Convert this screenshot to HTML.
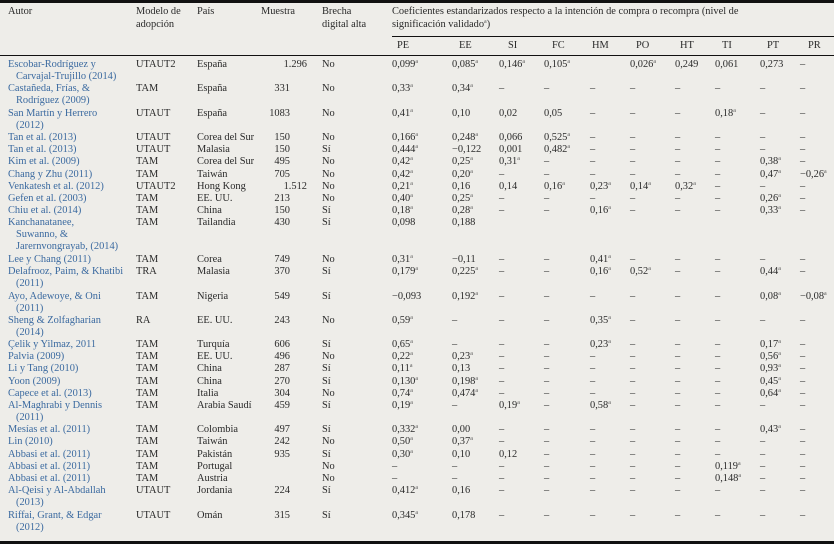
<!DOCTYPE html>
<html><head><meta charset="utf-8"><style>
body{margin:0;width:834px;height:544px;background:#eeede9;font-family:"Liberation Serif",serif;font-size:10.4px;color:#2a2a2a;position:relative;overflow:hidden}
.l{position:absolute;left:0;width:834px;background:#111}
.h{position:absolute;line-height:12.5px;white-space:nowrap}
.r{position:absolute;left:0;width:834px;height:12px;line-height:12.2px}
.r span{position:absolute;top:0;white-space:nowrap}
.a{position:absolute;left:0;top:0;width:130px;padding-left:16px;text-indent:-8px;color:#3b6aa0;line-height:12.2px;white-space:nowrap}
sup{font-size:6px;vertical-align:4px;line-height:0;color:#555}
.m{left:136px}.p{left:197px}.n{left:240px;width:50px;text-align:right}.b{left:322px}
.d1{left:392px}.d2{left:452px}.d3{left:499px}.d4{left:544px}.d5{left:590px}.d6{left:630px}.d7{left:675px}.d8{left:715px}.d9{left:760px}.d10{left:800px}
</style></head><body>
<div class="l" style="top:0;height:3px"></div>
<div class="l" style="top:55px;height:1px"></div>
<div class="l" style="top:36px;left:392px;width:442px;height:1px"></div>
<div class="l" style="top:541px;height:3px"></div>
<div class="h" style="left:8px;top:6px">Autor</div>
<div class="h" style="left:136px;top:6px">Modelo de<br>adopción</div>
<div class="h" style="left:197px;top:6px">País</div>
<div class="h" style="left:261px;top:6px">Muestra</div>
<div class="h" style="left:322px;top:6px">Brecha<br>digital alta</div>
<div class="h" style="left:392px;top:6px">Coeficientes estandarizados respecto a la intención de compra o recompra (nivel de<br>significación validado<sup>a</sup>)</div>
<div class="h" style="top:40px;left:0;width:834px;height:12px">
<span style="position:absolute;left:397px">PE</span><span style="position:absolute;left:459px">EE</span><span style="position:absolute;left:508px">SI</span><span style="position:absolute;left:552px">FC</span><span style="position:absolute;left:592px">HM</span><span style="position:absolute;left:636px">PO</span><span style="position:absolute;left:680px">HT</span><span style="position:absolute;left:722px">TI</span><span style="position:absolute;left:767px">PT</span><span style="position:absolute;left:808px">PR</span></div>

<div class="r" style="top:59px"><div class="a">Escobar-Rodríguez y<br>Carvajal-Trujillo (2014)</div><span class="m">UTAUT2</span><span class="p">España</span><span class="n" style="left:257px">1.296</span><span class="b">No</span><span class="d1">0,099<sup>a</sup></span><span class="d2">0,085<sup>a</sup></span><span class="d3">0,146<sup>a</sup></span><span class="d4">0,105<sup>a</sup></span><span class="d6">0,026<sup>a</sup></span><span class="d7">0,249</span><span class="d8">0,061</span><span class="d9">0,273</span><span class="d10">–</span></div>
<div class="r" style="top:83px"><div class="a">Castañeda, Frías, &amp;<br>Rodríguez (2009)</div><span class="m">TAM</span><span class="p">España</span><span class="n">331</span><span class="b">No</span><span class="d1">0,33<sup>a</sup></span><span class="d2">0,34<sup>a</sup></span><span class="d3">–</span><span class="d4">–</span><span class="d5">–</span><span class="d6">–</span><span class="d7">–</span><span class="d8">–</span><span class="d9">–</span><span class="d10">–</span></div>
<div class="r" style="top:108px"><div class="a">San Martín y Herrero<br>(2012)</div><span class="m">UTAUT</span><span class="p">España</span><span class="n">1083</span><span class="b">No</span><span class="d1">0,41<sup>a</sup></span><span class="d2">0,10</span><span class="d3">0,02</span><span class="d4">0,05</span><span class="d5">–</span><span class="d6">–</span><span class="d7">–</span><span class="d8">0,18<sup>a</sup></span><span class="d9">–</span><span class="d10">–</span></div>
<div class="r" style="top:132px"><div class="a">Tan et al. (2013)</div><span class="m">UTAUT</span><span class="p">Corea del Sur</span><span class="n">150</span><span class="b">No</span><span class="d1">0,166<sup>a</sup></span><span class="d2">0,248<sup>a</sup></span><span class="d3">0,066</span><span class="d4">0,525<sup>a</sup></span><span class="d5">–</span><span class="d6">–</span><span class="d7">–</span><span class="d8">–</span><span class="d9">–</span><span class="d10">–</span></div>
<div class="r" style="top:144px"><div class="a">Tan et al. (2013)</div><span class="m">UTAUT</span><span class="p">Malasia</span><span class="n">150</span><span class="b">Sí</span><span class="d1">0,444<sup>a</sup></span><span class="d2">−0,122</span><span class="d3">0,001</span><span class="d4">0,482<sup>a</sup></span><span class="d5">–</span><span class="d6">–</span><span class="d7">–</span><span class="d8">–</span><span class="d9">–</span><span class="d10">–</span></div>
<div class="r" style="top:156px"><div class="a">Kim et al. (2009)</div><span class="m">TAM</span><span class="p">Corea del Sur</span><span class="n">495</span><span class="b">No</span><span class="d1">0,42<sup>a</sup></span><span class="d2">0,25<sup>a</sup></span><span class="d3">0,31<sup>a</sup></span><span class="d4">–</span><span class="d5">–</span><span class="d6">–</span><span class="d7">–</span><span class="d8">–</span><span class="d9">0,38<sup>a</sup></span><span class="d10">–</span></div>
<div class="r" style="top:169px"><div class="a">Chang y Zhu (2011)</div><span class="m">TAM</span><span class="p">Taiwán</span><span class="n">705</span><span class="b">No</span><span class="d1">0,42<sup>a</sup></span><span class="d2">0,20<sup>a</sup></span><span class="d3">–</span><span class="d4">–</span><span class="d5">–</span><span class="d6">–</span><span class="d7">–</span><span class="d8">–</span><span class="d9">0,47<sup>a</sup></span><span class="d10">−0,26<sup>a</sup></span></div>
<div class="r" style="top:181px"><div class="a">Venkatesh et al. (2012)</div><span class="m">UTAUT2</span><span class="p">Hong Kong</span><span class="n" style="left:257px">1.512</span><span class="b">No</span><span class="d1">0,21<sup>a</sup></span><span class="d2">0,16</span><span class="d3">0,14</span><span class="d4">0,16<sup>a</sup></span><span class="d5">0,23<sup>a</sup></span><span class="d6">0,14<sup>a</sup></span><span class="d7">0,32<sup>a</sup></span><span class="d8">–</span><span class="d9">–</span><span class="d10">–</span></div>
<div class="r" style="top:193px"><div class="a">Gefen et al. (2003)</div><span class="m">TAM</span><span class="p">EE. UU.</span><span class="n">213</span><span class="b">No</span><span class="d1">0,40<sup>a</sup></span><span class="d2">0,25<sup>a</sup></span><span class="d3">–</span><span class="d4">–</span><span class="d5">–</span><span class="d6">–</span><span class="d7">–</span><span class="d8">–</span><span class="d9">0,26<sup>a</sup></span><span class="d10">–</span></div>
<div class="r" style="top:205px"><div class="a">Chiu et al. (2014)</div><span class="m">TAM</span><span class="p">China</span><span class="n">150</span><span class="b">Sí</span><span class="d1">0,18<sup>a</sup></span><span class="d2">0,28<sup>a</sup></span><span class="d3">–</span><span class="d4">–</span><span class="d5">0,16<sup>a</sup></span><span class="d6">–</span><span class="d7">–</span><span class="d8">–</span><span class="d9">0,33<sup>a</sup></span><span class="d10">–</span></div>
<div class="r" style="top:217px"><div class="a">Kanchanatanee,<br>Suwanno, &amp;<br>Jarernvongrayab, (2014)</div><span class="m">TAM</span><span class="p">Tailandia</span><span class="n">430</span><span class="b">Sí</span><span class="d1">0,098</span><span class="d2">0,188</span></div>
<div class="r" style="top:254px"><div class="a">Lee y Chang (2011)</div><span class="m">TAM</span><span class="p">Corea</span><span class="n">749</span><span class="b">No</span><span class="d1">0,31<sup>a</sup></span><span class="d2">−0,11</span><span class="d3">–</span><span class="d4">–</span><span class="d5">0,41<sup>a</sup></span><span class="d6">–</span><span class="d7">–</span><span class="d8">–</span><span class="d9">–</span><span class="d10">–</span></div>
<div class="r" style="top:266px"><div class="a">Delafrooz, Paim, &amp; Khatibi<br>(2011)</div><span class="m">TRA</span><span class="p">Malasia</span><span class="n">370</span><span class="b">Sí</span><span class="d1">0,179<sup>a</sup></span><span class="d2">0,225<sup>a</sup></span><span class="d3">–</span><span class="d4">–</span><span class="d5">0,16<sup>a</sup></span><span class="d6">0,52<sup>a</sup></span><span class="d7">–</span><span class="d8">–</span><span class="d9">0,44<sup>a</sup></span><span class="d10">–</span></div>
<div class="r" style="top:291px"><div class="a">Ayo, Adewoye, &amp; Oni<br>(2011)</div><span class="m">TAM</span><span class="p">Nigeria</span><span class="n">549</span><span class="b">Sí</span><span class="d1">−0,093</span><span class="d2">0,192<sup>a</sup></span><span class="d3">–</span><span class="d4">–</span><span class="d5">–</span><span class="d6">–</span><span class="d7">–</span><span class="d8">–</span><span class="d9">0,08<sup>a</sup></span><span class="d10">−0,08<sup>a</sup></span></div>
<div class="r" style="top:315px"><div class="a">Sheng &amp; Zolfagharian<br>(2014)</div><span class="m">RA</span><span class="p">EE. UU.</span><span class="n">243</span><span class="b">No</span><span class="d1">0,59<sup>a</sup></span><span class="d2">–</span><span class="d3">–</span><span class="d4">–</span><span class="d5">0,35<sup>a</sup></span><span class="d6">–</span><span class="d7">–</span><span class="d8">–</span><span class="d9">–</span><span class="d10">–</span></div>
<div class="r" style="top:339px"><div class="a">Çelik y Yilmaz, 2011</div><span class="m">TAM</span><span class="p">Turquía</span><span class="n">606</span><span class="b">Sí</span><span class="d1">0,65<sup>a</sup></span><span class="d2">–</span><span class="d3">–</span><span class="d4">–</span><span class="d5">0,23<sup>a</sup></span><span class="d6">–</span><span class="d7">–</span><span class="d8">–</span><span class="d9">0,17<sup>a</sup></span><span class="d10">–</span></div>
<div class="r" style="top:351px"><div class="a">Palvia (2009)</div><span class="m">TAM</span><span class="p">EE. UU.</span><span class="n">496</span><span class="b">No</span><span class="d1">0,22<sup>a</sup></span><span class="d2">0,23<sup>a</sup></span><span class="d3">–</span><span class="d4">–</span><span class="d5">–</span><span class="d6">–</span><span class="d7">–</span><span class="d8">–</span><span class="d9">0,56<sup>a</sup></span><span class="d10">–</span></div>
<div class="r" style="top:363px"><div class="a">Li y Tang (2010)</div><span class="m">TAM</span><span class="p">China</span><span class="n">287</span><span class="b">Sí</span><span class="d1">0,11<sup>a</sup></span><span class="d2">0,13</span><span class="d3">–</span><span class="d4">–</span><span class="d5">–</span><span class="d6">–</span><span class="d7">–</span><span class="d8">–</span><span class="d9">0,93<sup>a</sup></span><span class="d10">–</span></div>
<div class="r" style="top:376px"><div class="a">Yoon (2009)</div><span class="m">TAM</span><span class="p">China</span><span class="n">270</span><span class="b">Sí</span><span class="d1">0,130<sup>a</sup></span><span class="d2">0,198<sup>a</sup></span><span class="d3">–</span><span class="d4">–</span><span class="d5">–</span><span class="d6">–</span><span class="d7">–</span><span class="d8">–</span><span class="d9">0,45<sup>a</sup></span><span class="d10">–</span></div>
<div class="r" style="top:388px"><div class="a">Capece et al. (2013)</div><span class="m">TAM</span><span class="p">Italia</span><span class="n">304</span><span class="b">No</span><span class="d1">0,74<sup>a</sup></span><span class="d2">0,474<sup>a</sup></span><span class="d3">–</span><span class="d4">–</span><span class="d5">–</span><span class="d6">–</span><span class="d7">–</span><span class="d8">–</span><span class="d9">0,64<sup>a</sup></span><span class="d10">–</span></div>
<div class="r" style="top:400px"><div class="a">Al-Maghrabi y Dennis<br>(2011)</div><span class="m">TAM</span><span class="p">Arabia Saudí</span><span class="n">459</span><span class="b">Sí</span><span class="d1">0,19<sup>a</sup></span><span class="d2">–</span><span class="d3">0,19<sup>a</sup></span><span class="d4">–</span><span class="d5">0,58<sup>a</sup></span><span class="d6">–</span><span class="d7">–</span><span class="d8">–</span><span class="d9">–</span><span class="d10">–</span></div>
<div class="r" style="top:424px"><div class="a">Mesías et al. (2011)</div><span class="m">TAM</span><span class="p">Colombia</span><span class="n">497</span><span class="b">Sí</span><span class="d1">0,332<sup>a</sup></span><span class="d2">0,00</span><span class="d3">–</span><span class="d4">–</span><span class="d5">–</span><span class="d6">–</span><span class="d7">–</span><span class="d8">–</span><span class="d9">0,43<sup>a</sup></span><span class="d10">–</span></div>
<div class="r" style="top:436px"><div class="a">Lin (2010)</div><span class="m">TAM</span><span class="p">Taiwán</span><span class="n">242</span><span class="b">No</span><span class="d1">0,50<sup>a</sup></span><span class="d2">0,37<sup>a</sup></span><span class="d3">–</span><span class="d4">–</span><span class="d5">–</span><span class="d6">–</span><span class="d7">–</span><span class="d8">–</span><span class="d9">–</span><span class="d10">–</span></div>
<div class="r" style="top:449px"><div class="a">Abbasi et al. (2011)</div><span class="m">TAM</span><span class="p">Pakistán</span><span class="n">935</span><span class="b">Sí</span><span class="d1">0,30<sup>a</sup></span><span class="d2">0,10</span><span class="d3">0,12</span><span class="d4">–</span><span class="d5">–</span><span class="d6">–</span><span class="d7">–</span><span class="d8">–</span><span class="d9">–</span><span class="d10">–</span></div>
<div class="r" style="top:461px"><div class="a">Abbasi et al. (2011)</div><span class="m">TAM</span><span class="p">Portugal</span><span class="b">No</span><span class="d1">–</span><span class="d2">–</span><span class="d3">–</span><span class="d4">–</span><span class="d5">–</span><span class="d6">–</span><span class="d7">–</span><span class="d8">0,119<sup>a</sup></span><span class="d9">–</span><span class="d10">–</span></div>
<div class="r" style="top:473px"><div class="a">Abbasi et al. (2011)</div><span class="m">TAM</span><span class="p">Austria</span><span class="b">No</span><span class="d1">–</span><span class="d2">–</span><span class="d3">–</span><span class="d4">–</span><span class="d5">–</span><span class="d6">–</span><span class="d7">–</span><span class="d8">0,148<sup>a</sup></span><span class="d9">–</span><span class="d10">–</span></div>
<div class="r" style="top:485px"><div class="a">Al-Qeisi y Al-Abdallah<br>(2013)</div><span class="m">UTAUT</span><span class="p">Jordania</span><span class="n">224</span><span class="b">Sí</span><span class="d1">0,412<sup>a</sup></span><span class="d2">0,16</span><span class="d3">–</span><span class="d4">–</span><span class="d5">–</span><span class="d6">–</span><span class="d7">–</span><span class="d8">–</span><span class="d9">–</span><span class="d10">–</span></div>
<div class="r" style="top:510px"><div class="a">Riffai, Grant, &amp; Edgar<br>(2012)</div><span class="m">UTAUT</span><span class="p">Omán</span><span class="n">315</span><span class="b">Sí</span><span class="d1">0,345<sup>a</sup></span><span class="d2">0,178</span><span class="d3">–</span><span class="d4">–</span><span class="d5">–</span><span class="d6">–</span><span class="d7">–</span><span class="d8">–</span><span class="d9">–</span><span class="d10">–</span></div>
</body></html>
